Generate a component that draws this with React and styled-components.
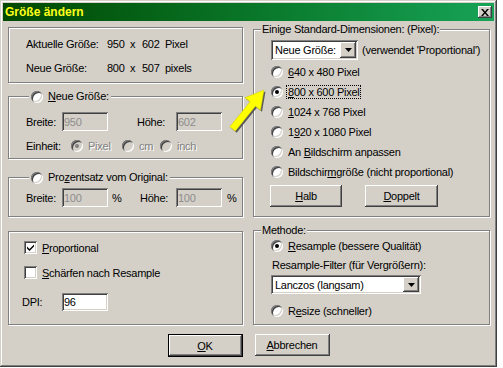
import React from "react";
import styled, { createGlobalStyle, css } from "styled-components";

const Global = createGlobalStyle`
  html, body { margin: 0; padding: 0; background: #fff; }
  body { font-family: "Liberation Sans", Arial, sans-serif; font-size: 11px; }
`;

const raised = css`
  box-shadow: inset -1px -1px #404040, inset 1px 1px #fff, inset -2px -2px #808080, inset 2px 2px #d4d0c8;
`;

const sunken = css`
  box-shadow: inset 1px 1px #808080, inset -1px -1px #fff, inset 2px 2px #404040, inset -2px -2px #d4d0c8;
`;

const etched = css`
  border: 1px solid #808080;
  box-shadow: inset 1px 1px #fff, 1px 1px #fff;
`;

const Dialog = styled.div`
  position: relative;
  width: 497px;
  height: 367px;
  box-sizing: border-box;
  padding: 3px;
  background: #d4d0c8;
  box-shadow: inset -1px -1px #404040, inset 1px 1px #d4d0c8, inset -2px -2px #808080, inset 2px 2px #fff;
  display: flex;
  flex-direction: column;
  color: #000;
  letter-spacing: -0.25px;
`;

const TitleBar = styled.div`
  height: 18px;
  display: flex;
  align-items: center;
  justify-content: space-between;
  padding-left: 2px;
  background: linear-gradient(90deg, #004800 0%, #0a7a2c 55%, #17a357 100%);
`;

const Title = styled.span`
  color: #ffff1a;
  font-weight: bold;
  font-size: 12px;
  letter-spacing: 0;
`;

const CloseButton = styled.div`
  width: 14px;
  height: 12px;
  margin-right: 2px;
  background: #d4d0c8;
  display: flex;
  align-items: center;
  justify-content: center;
  ${raised}
`;

const Body = styled.div`
  display: grid;
  grid-template-columns: 235px 237px;
  grid-template-rows: 194px 101px;
  column-gap: 10px;
  row-gap: 7px;
  padding: 2px 4px 0 5px;
`;

const Column = styled.div`
  display: flex;
  flex-direction: column;
  padding-top: ${(p) => p.$pt || 0}px;
`;

const Panel = styled.div`
  ${etched}
  box-sizing: border-box;
  height: ${(p) => p.$h}px;
  margin-top: ${(p) => p.$mt || 0}px;
`;

const Group = styled.fieldset`
  ${etched}
  box-sizing: border-box;
  margin: ${(p) => p.$mt || 0}px 0 0 0;
  padding: 0;
  min-width: 0;
  height: ${(p) => p.$h}px;
`;

const Legend = styled.legend`
  margin-left: ${(p) => p.$ml}px;
  padding: 0 ${(p) => p.$pad ?? 1}px;
  background: #d4d0c8;
  line-height: 13px;
  height: 13px;
  display: flex;
  align-items: center;
  gap: 5px;
`;

const InfoGrid = styled.div`
  display: grid;
  grid-template-columns: 81px 23px 12px 23px auto;
  row-gap: 11px;
  line-height: 13px;
  padding: 10px 0 0 17px;
`;

const Inner = styled.div`
  display: flex;
  flex-direction: column;
  padding: ${(p) => p.$pt || 0}px 0 0 ${(p) => p.$pl}px;
`;

const FieldRow = styled.div`
  display: grid;
  grid-template-columns: ${(p) => p.$cols};
  align-items: center;
  height: 19px;
`;

const Pct = styled.span`
  padding-left: ${(p) => p.$pl}px;
`;

const UnitRow = styled.div`
  display: flex;
  align-items: center;
  height: 14px;
  margin-top: 8px;
`;

const UnitLabel = styled.span`
  width: 45px;
`;

const UnitOption = styled.span`
  display: flex;
  align-items: center;
  gap: 5px;
  width: ${(p) => p.$w}px;
  color: #808080;
  text-shadow: 1px 1px #fff;
`;

const TextBox = styled.input`
  width: ${(p) => p.$w || 46}px;
  height: ${(p) => p.$h || 19}px;
  box-sizing: border-box;
  border: none;
  outline: none;
  padding: 0 2px;
  margin: 0;
  font: inherit;
  letter-spacing: inherit;
  background: ${(p) => (p.$disabled ? "#d4d0c8" : "#fff")};
  color: ${(p) => (p.$disabled ? "#8c8c8c" : "#000")};
  ${sunken}
`;

const Radio = styled.span`
  position: relative;
  flex: none;
  display: inline-block;
  width: 12px;
  height: 12px;
  box-sizing: border-box;
  border-radius: 50%;
  background: ${(p) => (p.$disabled ? "#d4d0c8" : "#fff")};
  ${sunken}
  &::after {
    content: "";
    display: ${(p) => (p.$checked ? "block" : "none")};
    position: absolute;
    left: 4px;
    top: 4px;
    width: 4px;
    height: 4px;
    border-radius: 50%;
    background: ${(p) => (p.$disabled ? "#808080" : "#000")};
  }
`;

const CheckBox = styled.span`
  flex: none;
  width: 13px;
  height: 13px;
  box-sizing: border-box;
  background: #fff;
  display: flex;
  align-items: center;
  justify-content: center;
  ${sunken}
`;

const Option = styled.div`
  display: flex;
  align-items: center;
  gap: ${(p) => p.$gap ?? 5}px;
  height: ${(p) => p.$h || 20}px;
  margin-top: ${(p) => p.$mt || 0}px;
  margin-left: ${(p) => p.$ml || 0}px;
`;

const Focus = styled.span`
  outline: 1px dotted #000;
  padding: 0 1px;
  margin-left: -1px;
`;

const U = styled.u`
  text-decoration: underline;
  text-underline-offset: 1px;
`;

const DpiLabel = styled.span`
  width: 40px;
  margin-left: -2px;
`;

const Select = styled.div`
  width: ${(p) => p.$w}px;
  height: ${(p) => p.$h}px;
  box-sizing: border-box;
  background: #fff;
  padding: 2px;
  display: flex;
  align-items: center;
  margin-top: ${(p) => p.$mt || 0}px;
  ${sunken}
`;

const SelectText = styled.span`
  flex: 1;
  padding-left: 2px;
`;

const DropButton = styled.span`
  width: 16px;
  align-self: stretch;
  background: #d4d0c8;
  display: flex;
  align-items: center;
  justify-content: center;
  ${raised}
`;

const Hint = styled.span`
  margin-left: 4px;
`;

const Caption = styled.div`
  line-height: 13px;
  margin: 4px 0 0 1px;
`;

const ButtonRow = styled.div`
  display: flex;
  gap: ${(p) => p.$gap}px;
  margin: ${(p) => p.$mt || 0}px 0 0 ${(p) => p.$ml || 0}px;
  justify-content: ${(p) => p.$center ? "center" : "flex-start"};
  padding-top: ${(p) => p.$pt || 0}px;
`;

const Button = styled.button`
  width: ${(p) => p.$w}px;
  height: ${(p) => p.$h}px;
  box-sizing: border-box;
  margin: 0;
  padding: 0;
  font: inherit;
  letter-spacing: inherit;
  color: #000;
  background: #d4d0c8;
  border: ${(p) => (p.$default ? "1px solid #000" : "none")};
  ${raised}
`;

const Arrow = styled.svg`
  position: absolute;
  left: 222px;
  top: 84px;
  pointer-events: none;
`;

const Triangle = () => (
  <svg width="7" height="4" viewBox="0 0 7 4">
    <path d="M0 0h7L3.5 4z" fill="#000" />
  </svg>
);

const arrowPoints = "42,6 38.5,26.3 33.4,22.2 13.2,47.2 7.8,42.8 28,17.8 22.9,13.7";

export default function App() {
  return (
    <>
      <Global />
      <Dialog>
        <TitleBar>
          <Title>Größe ändern</Title>
          <CloseButton>
            <svg width="8" height="7" viewBox="0 0 8 7">
              <path d="M0 0h2l2 2.4L6 0h2L5 3.5 8 7H6L4 4.6 2 7H0l3-3.5z" fill="#000" />
            </svg>
          </CloseButton>
        </TitleBar>

        <Body>
          <Column $pt={4}>
            <Panel $h={56}>
              <InfoGrid>
                <span>Aktuelle Größe:</span><span>950</span><span>x</span><span>602</span><span>Pixel</span>
                <span>Neue Größe:</span><span>800</span><span>x</span><span>507</span><span>pixels</span>
              </InfoGrid>
            </Panel>

            <Group $h={69} $mt={7}>
              <Legend $ml={20} $pad={2}>
                <Radio />
                <span><U>N</U>eue Größe:</span>
              </Legend>
              <Inner $pt={9} $pl={17}>
                <FieldRow $cols="36px 46px 29px 39px 46px">
                  <span>Breite:</span>
                  <TextBox $disabled readOnly value="950" />
                  <span />
                  <span>Höhe:</span>
                  <TextBox $disabled readOnly value="602" />
                </FieldRow>
                <UnitRow>
                  <UnitLabel>Einheit:</UnitLabel>
                  <UnitOption $w={51}><Radio $disabled $checked />Pixel</UnitOption>
                  <UnitOption $w={38}><Radio $disabled />cm</UnitOption>
                  <UnitOption $w={40}><Radio $disabled />inch</UnitOption>
                </UnitRow>
              </Inner>
            </Group>

            <Group $h={46} $mt={12}>
              <Legend $ml={20} $pad={2}>
                <Radio />
                <span>Pro<U>z</U>entsatz vom Original:</span>
              </Legend>
              <Inner $pt={4} $pl={17}>
                <FieldRow $cols="36px 46px 32px 36px 46px auto">
                  <span>Breite:</span>
                  <TextBox $disabled readOnly value="100" />
                  <Pct $pl={4}>%</Pct>
                  <span>Höhe:</span>
                  <TextBox $disabled readOnly value="100" />
                  <Pct $pl={5}>%</Pct>
                </FieldRow>
              </Inner>
            </Group>
          </Column>

          <Group $h={194}>
            <Legend $ml={7}>Einige Standard-Dimensionen: (Pixel):</Legend>
            <Inner $pt={4} $pl={17}>
              <Option $h={20} $gap={0}>
                <Select $w={87} $h={20}>
                  <SelectText>Neue Größe:</SelectText>
                  <DropButton><Triangle /></DropButton>
                </Select>
                <Hint>(verwendet 'Proportional')</Hint>
              </Option>
              <Option $mt={2}><Radio /><span><U>6</U>40 x 480 Pixel</span></Option>
              <Option><Radio $checked /><Focus><U>8</U>00 x 600 Pixel</Focus></Option>
              <Option><Radio /><span><U>1</U>024 x 768 Pixel</span></Option>
              <Option><Radio /><span>1<U>9</U>20 x 1080 Pixel</span></Option>
              <Option><Radio /><span>An <U>B</U>ildschirm anpassen</span></Option>
              <Option><Radio /><span>Bildschir<U>m</U>größe (nicht proportional)</span></Option>
              <ButtonRow $gap={23} $mt={3} $ml={-1}>
                <Button $w={72} $h={22}><U>H</U>alb</Button>
                <Button $w={73} $h={22}><U>D</U>oppelt</Button>
              </ButtonRow>
            </Inner>
          </Group>

          <Panel $h={94} $mt={7}>
            <Inner $pt={9} $pl={15}>
              <Option $h={13}><CheckBox>
                <svg width="7" height="7" viewBox="0 0 7 7">
                  <path d="M0 2.5l2.5 2.5L7 0.5v2L2.5 7 0 4.5z" fill="#000" />
                </svg>
              </CheckBox><span><U>P</U>roportional</span></Option>
              <Option $h={13} $mt={12}><CheckBox /><span><U>S</U>chärfen nach Resample</span></Option>
              <Option $h={18} $mt={14} $gap={0}>
                <DpiLabel>DPI:</DpiLabel>
                <TextBox readOnly value="96" $h={18} />
              </Option>
            </Inner>
          </Panel>

          <Group $h={101}>
            <Legend $ml={7}>Methode:</Legend>
            <Inner $pl={17}>
              <Option $h={18}><Radio $checked /><span><U>R</U>esample (bessere Qualität)</span></Option>
              <Caption>Resample-Filter (für Vergrößern):</Caption>
              <Select $w={150} $h={19} $mt={3}>
                <SelectText>Lanczos (langsam)</SelectText>
                <DropButton><Triangle /></DropButton>
              </Select>
              <Option $h={18} $mt={8}><Radio /><span>R<U>e</U>size (schneller)</span></Option>
            </Inner>
          </Group>
        </Body>

        <ButtonRow $gap={12} $center $pt={9}>
          <Button $w={75} $h={23} $default><U>O</U>K</Button>
          <Button $w={75} $h={22}><U>A</U>bbrechen</Button>
        </ButtonRow>

        <Arrow width="48" height="52" viewBox="0 0 48 52">
          <polygon points={arrowPoints} fill="#5a5a5a" transform="translate(1.5 1.5)" />
          <polygon points={arrowPoints} fill="#ffff00" stroke="#c8c800" strokeWidth="0.5" />
        </Arrow>
      </Dialog>
    </>
  );
}
